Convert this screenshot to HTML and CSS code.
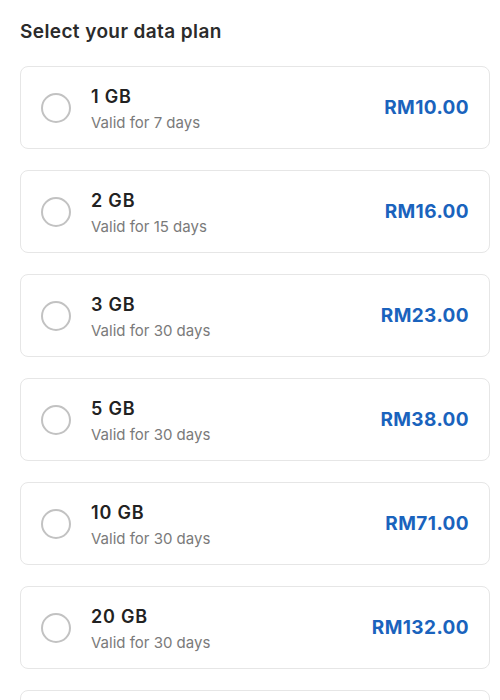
FILE: index.html
```html
<!DOCTYPE html>
<html lang="en">
<head>
    <meta charset="UTF-8">
    <meta name="viewport" content="width=device-width, initial-scale=1.0">
    <title>Data plans</title>
    <link rel="stylesheet" href="styles.css">
</head>
<body>
    <div class="page">
        <h1 class="title">Select your data plan</h1>

        <div class="plans">
            <label class="plan">
                <span class="radio"></span>
                <span class="info">
                    <span class="amount">1 GB</span>
                    <span class="validity">Valid for 7 days</span>
                </span>
                <span class="price">RM10.00</span>
            </label>
            <label class="plan">
                <span class="radio"></span>
                <span class="info">
                    <span class="amount">2 GB</span>
                    <span class="validity">Valid for 15 days</span>
                </span>
                <span class="price">RM16.00</span>
            </label>
            <label class="plan">
                <span class="radio"></span>
                <span class="info">
                    <span class="amount">3 GB</span>
                    <span class="validity">Valid for 30 days</span>
                </span>
                <span class="price">RM23.00</span>
            </label>
            <label class="plan">
                <span class="radio"></span>
                <span class="info">
                    <span class="amount">5 GB</span>
                    <span class="validity">Valid for 30 days</span>
                </span>
                <span class="price">RM38.00</span>
            </label>
            <label class="plan">
                <span class="radio"></span>
                <span class="info">
                    <span class="amount">10 GB</span>
                    <span class="validity">Valid for 30 days</span>
                </span>
                <span class="price">RM71.00</span>
            </label>
            <label class="plan">
                <span class="radio"></span>
                <span class="info">
                    <span class="amount">20 GB</span>
                    <span class="validity">Valid for 30 days</span>
                </span>
                <span class="price">RM132.00</span>
            </label>
            <label class="plan">
                <span class="radio"></span>
                <span class="info">
                    <span class="amount">50 GB</span>
                    <span class="validity">Valid for 30 days</span>
                </span>
                <span class="price">RM250.00</span>
            </label>
        </div>
    </div>
</body>
</html>
```

FILE: styles.css
```css
body {
    margin: 0;
    background-color: #ffffff;
    font-family: Inter, "Noto Sans", Arial, sans-serif;
    color: #222222;
}
.page {
    padding: 20px 10px 0 20px;
}
.title {
    margin: 0 0 22px 0;
    font-size: 19px;
    line-height: 24px;
    font-weight: 600;
    letter-spacing: 0.4px;
    color: #2b2b2b;
}
.plans {
    display: flex;
    flex-direction: column;
    gap: 21px;
}
.plan {
    display: flex;
    align-items: center;
    height: 83px;
    box-sizing: border-box;
    padding: 0 20px;
    border: 1px solid #e6e6e6;
    border-radius: 8px;
    cursor: pointer;
}
.radio {
    width: 30px;
    height: 30px;
    box-sizing: border-box;
    border: 2px solid #c2c2c2;
    border-radius: 50%;
    flex-shrink: 0;
}
.info {
    display: flex;
    flex-direction: column;
    flex: 1;
    margin-left: 20px;
    margin-top: 2px;
}
.amount {
    font-size: 18px;
    line-height: 24px;
    font-weight: 600;
    letter-spacing: 0.8px;
    color: #222222;
}
.validity {
    margin-top: 4px;
    font-size: 15px;
    line-height: 20px;
    color: #7a7a7a;
}
.price {
    font-size: 19px;
    font-weight: 700;
    letter-spacing: 0.4px;
    color: #1a63bd;
}
```
